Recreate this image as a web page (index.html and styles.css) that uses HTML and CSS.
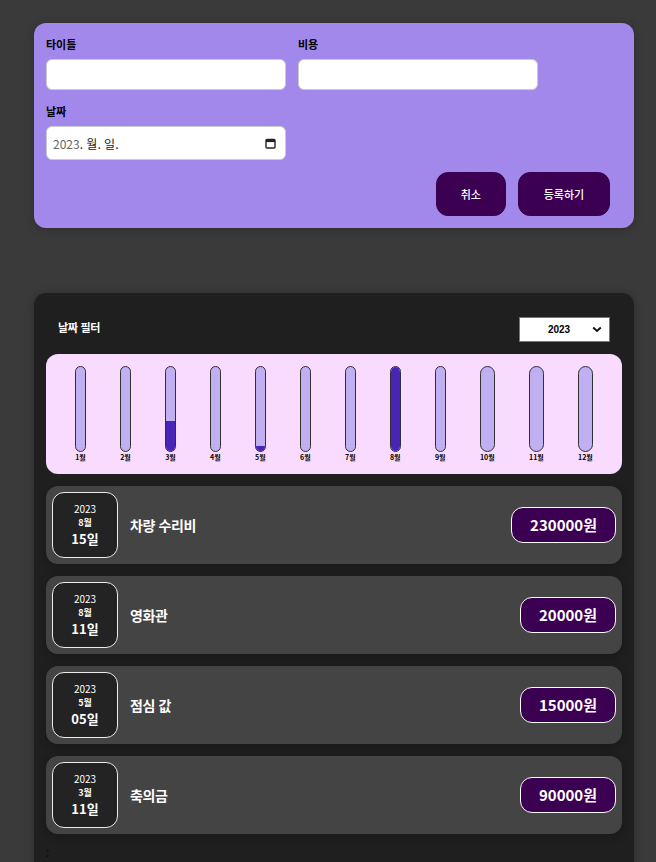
FILE: index.html
```html
<!DOCTYPE html>
<html lang="ko">
<head>
<meta charset="utf-8">
<title>Expenses</title>
<link rel="stylesheet" href="styles.css">
</head>
<body>
<div class="app">
  <div class="new-expense">
    <form class="expense-form">
      <div class="controls">
        <div class="control">
          <label>타이틀</label>
          <div class="field"></div>
        </div>
        <div class="control">
          <label>비용</label>
          <div class="field"></div>
        </div>
        <div class="control">
          <label>날짜</label>
          <div class="field date-field">
            <span class="date-text"><span class="year">2023</span>. 월. 일.</span>
            <svg class="cal" width="11" height="11" viewBox="0 0 11 11"><rect x="1" y="1.5" width="9" height="8.5" rx="1" fill="none" stroke="#222" stroke-width="1.4"/><rect x="1" y="1.5" width="9" height="2.6" fill="#222"/></svg>
          </div>
        </div>
      </div>
      <div class="actions">
        <button type="button" class="btn">취소</button>
        <button type="button" class="btn btn-wide">등록하기</button>
      </div>
    </form>
  </div>

  <div class="expenses">
    <div class="filter">
      <span class="filter-label">날짜 필터</span>
      <div class="select">
        <span class="select-value">2023</span>
        <svg class="chev" width="10" height="7" viewBox="0 0 10 7"><path d="M1.2 1.5 L5 5 L8.8 1.5" fill="none" stroke="#111" stroke-width="1.9"/></svg>
      </div>
    </div>

    <div class="chart">
      <div class="bar"><div class="bar-inner"><div class="bar-fill" style="height:0%"></div></div><div class="bar-label">1월</div></div>
      <div class="bar"><div class="bar-inner"><div class="bar-fill" style="height:0%"></div></div><div class="bar-label">2월</div></div>
      <div class="bar"><div class="bar-inner"><div class="bar-fill" style="height:36%"></div></div><div class="bar-label">3월</div></div>
      <div class="bar"><div class="bar-inner"><div class="bar-fill" style="height:0%"></div></div><div class="bar-label">4월</div></div>
      <div class="bar"><div class="bar-inner"><div class="bar-fill" style="height:6%"></div></div><div class="bar-label">5월</div></div>
      <div class="bar"><div class="bar-inner"><div class="bar-fill" style="height:0%"></div></div><div class="bar-label">6월</div></div>
      <div class="bar"><div class="bar-inner"><div class="bar-fill" style="height:0%"></div></div><div class="bar-label">7월</div></div>
      <div class="bar"><div class="bar-inner"><div class="bar-fill" style="height:100%"></div></div><div class="bar-label">8월</div></div>
      <div class="bar"><div class="bar-inner"><div class="bar-fill" style="height:0%"></div></div><div class="bar-label">9월</div></div>
      <div class="bar"><div class="bar-inner"><div class="bar-fill" style="height:0%"></div></div><div class="bar-label">10월</div></div>
      <div class="bar"><div class="bar-inner"><div class="bar-fill" style="height:0%"></div></div><div class="bar-label">11월</div></div>
      <div class="bar"><div class="bar-inner"><div class="bar-fill" style="height:0%"></div></div><div class="bar-label">12월</div></div>
    </div>

    <ul class="list">
      <li class="item">
        <div class="date"><span class="d-year">2023</span><span class="d-month">8월</span><span class="d-day">15일</span></div>
        <h2 class="title">차량 수리비</h2>
        <div class="price">230000원</div>
      </li>
      <li class="item">
        <div class="date"><span class="d-year">2023</span><span class="d-month">8월</span><span class="d-day">11일</span></div>
        <h2 class="title">영화관</h2>
        <div class="price">20000원</div>
      </li>
      <li class="item">
        <div class="date"><span class="d-year">2023</span><span class="d-month">5월</span><span class="d-day">05일</span></div>
        <h2 class="title">점심 값</h2>
        <div class="price">15000원</div>
      </li>
      <li class="item">
        <div class="date"><span class="d-year">2023</span><span class="d-month">3월</span><span class="d-day">11일</span></div>
        <h2 class="title">축의금</h2>
        <div class="price">90000원</div>
      </li>
    </ul>
    <div class="tail">:</div>
  </div>
</div>
</body>
</html>
```

FILE: styles.css
```css
* { box-sizing: border-box; }

body {
  margin: 0;
  background: #3a3a3a;
  font-family: "Noto Sans CJK KR", "Noto Sans", sans-serif;
  font-size: 12px;
}

.app {
  padding: 23px 0 0 34px;
}

.new-expense {
  width: 600px;
  padding: 12px;
  background: #a188ea;
  border-radius: 12px;
  box-shadow: 0 1px 8px rgba(0, 0, 0, 0.25);
}

.controls {
  display: flex;
  flex-wrap: wrap;
  gap: 12px;
  margin-bottom: 12px;
}

.control {
  width: 240px;
}

.control label {
  display: block;
  font-weight: bold;
  font-size: 11px;
  line-height: 18px;
  margin-bottom: 6px;
  color: #000;
}

.field {
  height: 31px;
  background: #fff;
  border: 1px solid #ccc;
  border-radius: 6px;
}

.date-field {
  height: 34px;
  display: flex;
  align-items: center;
  justify-content: space-between;
  padding: 0 9px 0 6px;
}

.date-text {
  font-size: 12px;
  color: #222;
}

.date-text .year {
  color: #666;
}

.actions {
  display: flex;
  justify-content: flex-end;
  gap: 12px;
  padding-right: 12px;
}

.btn {
  font-family: inherit;
  font-size: 11px;
  font-weight: 500;
  line-height: 18px;
  padding: 12px 24px;
  border: 1px solid #3c0052;
  background: #3c0052;
  color: #fff;
  border-radius: 12px;
}

.btn-wide {
  min-width: 92px;
}

.expenses {
  width: 600px;
  margin-top: 65px;
  padding: 12px 12px 0;
  background: #1f1f1f;
  border-radius: 12px 12px 0 0;
  box-shadow: 0 1px 8px rgba(0, 0, 0, 0.25);
}

.filter {
  display: flex;
  align-items: center;
  justify-content: space-between;
  padding: 0 12px;
  margin: 12px 0;
}

.filter-label {
  color: #fff;
  font-weight: bold;
  font-size: 11px;
  letter-spacing: -0.3px;
  margin-bottom: 6px;
}

.select {
  width: 91px;
  height: 25px;
  background: #fff;
  border: 1px solid #767676;
  display: flex;
  align-items: center;
  padding: 0 7px 0 0;
}

.select-value {
  flex: 1;
  text-align: center;
  font-family: "Liberation Sans", Arial, sans-serif;
  font-weight: bold;
  font-size: 10px;
  color: #000;
  padding-left: 6px;
}

.chart {
  height: 120px;
  padding: 12px;
  background: #f8dbff;
  border-radius: 12px;
  display: flex;
  justify-content: space-around;
}

.bar {
  height: 100%;
  display: flex;
  flex-direction: column;
  align-items: center;
}

.bar-inner {
  flex: 1;
  width: 100%;
  border: 1px solid #313131;
  border-radius: 12px;
  background: #c0b0f1;
  overflow: hidden;
  display: flex;
  flex-direction: column;
  justify-content: flex-end;
}

.bar-fill {
  width: 100%;
  background: #4a24b6;
}

.bar-label {
  font-weight: bold;
  font-size: 7px;
  line-height: 10px;
  color: #000;
}

.list {
  list-style: none;
  margin: 0;
  padding: 0;
}

.item {
  display: flex;
  align-items: center;
  margin: 12px 0;
  padding: 6px;
  border-radius: 12px;
  background: #444;
  box-shadow: 0 2px 8px rgba(0, 0, 0, 0.25);
}

.date {
  width: 66px;
  height: 66px;
  display: flex;
  flex-direction: column;
  align-items: center;
  justify-content: center;
  border: 1px solid #ececec;
  background: #232323;
  color: #fff;
  border-radius: 12px;
}

.d-year {
  font-size: 10px;
  line-height: 14px;
}

.d-month {
  font-size: 9px;
  font-weight: bold;
  line-height: 13px;
}

.d-day {
  font-size: 13px;
  font-weight: bold;
  line-height: 19px;
}

.title {
  flex: 1;
  margin: 0 12px;
  color: #fff;
  font-size: 14px;
  letter-spacing: -0.4px;
  font-weight: bold;
}

.price {
  font-size: 15px;
  line-height: 22px;
  font-weight: bold;
  color: #fff;
  background: #3c0052;
  border: 1px solid #fff;
  padding: 6px 18px;
  border-radius: 12px;
}

.tail {
  color: #0a0a0a;
  font-size: 12px;
  line-height: 14px;
  margin-top: 0;
  padding-bottom: 20px;
}
```
